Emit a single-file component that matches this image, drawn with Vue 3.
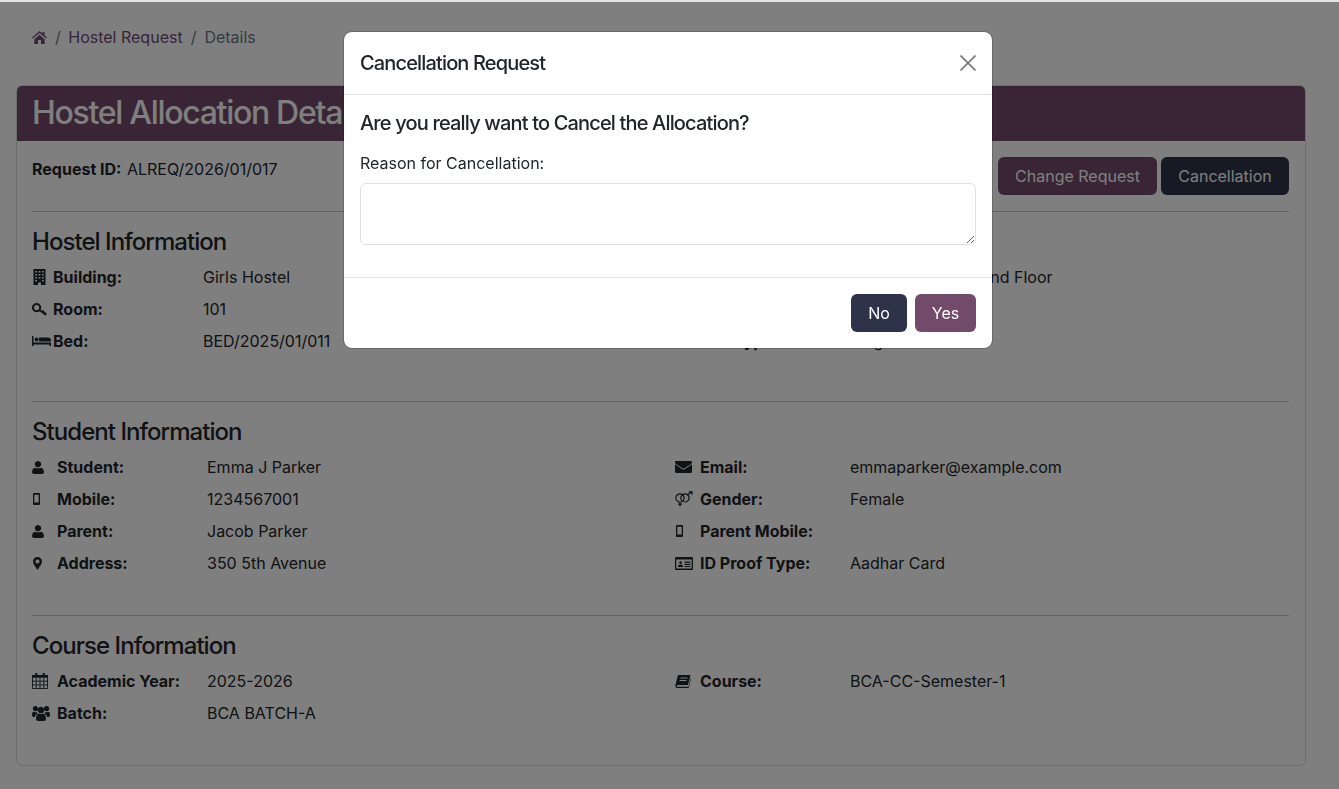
<script setup>
const icons = {
  home: { w: 15, h: 13, d: 'M7.5 0 0 6.4l.9 1L7.500 1.900 14.100 7.400l.9-1-2.500-2.100V1h-2v1.600ZM2.300 8.200 7.500 3.700l5.200 4.500V13H9V9H6v4H2.300Z' },
  building: { w: 13, h: 16, d: 'M.5 0h12v16H8v-2.500H5V16H.5ZM2.300 2v1.400h1.700V2Zm3.300 0v1.400h1.800V2Zm3.400 0v1.400h1.700V2ZM2.300 5v1.400h1.700V5Zm3.300 0v1.400h1.800V5ZM9 5v1.400h1.700V5ZM2.300 8v1.400h1.700V8Zm3.300 0v1.400h1.800V8ZM9 8v1.400h1.700V8ZM2.300 11v1.400h1.700V11ZM9 11v1.400h1.700V11Z' },
  key: { w: 15, h: 13, s: 'M4.600 1a3.600 3.600 0 1 0 .01 0ZM7.400 6.800l6.600 5.200M10.500 9.300l1.400-1.500M12.700 11l1.300-1.300', sw: 2 },
  bed: { w: 19, h: 10, d: 'M0 0h1.500v6.500H19V10h-1.500V8.500H1.500V10H0ZM4.500 1.500a2 2 0 1 0 .01 0ZM7 1.500h9q3 0 3 3v1H7Z' },
  user: { w: 12, h: 13, d: 'M6 0a3.200 3.200 0 1 0 .01 0ZM0 11.300C0 8.500 1.500 7 3 6.800c1 .8 5 .8 6 0 1.500.2 3 1.700 3 4.500 0 1.100-1 1.700-2 1.700H2c-1 0-2-.6-2-1.700Z' },
  mobile: { w: 7, h: 12, d: 'M1 0h5a1 1 0 0 1 1 1v10a1 1 0 0 1-1 1H1a1 1 0 0 1-1-1V1a1 1 0 0 1 1-1ZM1.300 1.800v7.800h4.400V1.800Z' },
  marker: { w: 9, h: 13, d: 'M4.500 0A4.500 4.500 0 0 0 0 4.500C0 7 3 10.500 4.500 13 6 10.500 9 7 9 4.500A4.500 4.500 0 0 0 4.500 0Zm0 2.500a2 2 0 1 0 .01 0Z' },
  envelope: { w: 17, h: 12, d: 'M0 1.200C0 .5.6 0 1.200 0h14.600c.6 0 1.200.5 1.200 1.200 0 .8-.7 1.600-1.300 2L9.500 7.300c-.6.4-1.400.4-2 0L1.300 3.200C.7 2.800 0 2 0 1.200ZM0 3.300v7.500c0 .7.5 1.200 1.200 1.200h14.600c.7 0 1.200-.5 1.200-1.200V3.300L10 8c-1 .8-2 .8-3 0Z' },
  venus: { w: 18, h: 16, s: 'M5 2.800a4.100 4.100 0 1 0 .01 0ZM10 2.800a4.100 4.100 0 1 0 .01 0ZM5 11V15.500M3 13.200h4M12.800 3.800 16.800.9M13.800.8h3.200v3', sw: 1.2 },
  idcard: { w: 18, h: 13, d: 'M1 0h16a1 1 0 0 1 1 1v11a1 1 0 0 1-1 1H1a1 1 0 0 1-1-1V1a1 1 0 0 1 1-1ZM1.300 2.600v8.900h15.400V2.600ZM5.500 4.200a1.400 1.400 0 1 0 .01 0ZM3 10V9q0-1.600 2.500-1.600T8 9v1ZM9.500 4.500h6v1.200h-6Zm0 2.200h6v1.200h-6Zm0 2.200h6v1.200h-6Z' },
  calendar: { w: 16, h: 16, d: 'M0 2h3.200V0h2.200v2h5.200V0h2.200v2H16v2.800H0Z', s: 'M.5 4.500v11h15v-11M4.200 5v10.500M8 5v10.500M11.800 5v10.500M.5 8.200h15M.5 11.900h15', sw: .9 },
  users: { w: 18, h: 16, d: 'M9 1.700a3.300 3.300 0 1 0 .01 0ZM3.400 1a2.600 2.600 0 1 0 .01 0ZM14.600 1a2.600 2.600 0 1 0 .01 0ZM4 14c0-3.500 1.500-5.500 3-5.500 1 .8 3 .8 4 0 1.500 0 3 2 3 5.500 0 1.200-1 2-2 2H6c-1 0-2-.8-2-2ZM0 9.500C0 7.500 1 6.800 2 6.800c1 .7 2.300.5 2.800.3 0 .9.4 1.400.7 1.600C4 9.500 3 11 3 12H1.200C.5 12 0 11 0 9.500ZM18 9.500c0-2-1-2.700-2-2.700-1 .7-2.300.5-2.800.3 0 .9-.4 1.400-.7 1.600 1.500.8 2.500 2.300 2.500 3.300h1.800c.7 0 1.200-1 1.200-2.500Z' },
  book: { w: 16, h: 13, d: 'M3 0h12.500L13 10H2.500c-1 0-1 1.700 0 1.700h11L15.700 3 16 4l-2.200 8.400q-.2.6-.8.6H2.400C.8 13 0 11.500.4 10ZM5.500 2.500l-.3 1h7l.3-1ZM4.800 5l-.3 1h7l.3-1Z' }
}

const hostelRows = [
  { icon: 'building', label: 'Building:', value: 'Girls Hostel' },
  { icon: 'building', label: 'Floor:', value: 'Girls Hostel - Ground Floor' },
  { icon: 'key', label: 'Room:', value: '101' },
  { icon: 'building', label: 'Room Type:', value: '' },
  { icon: 'bed', label: 'Bed:', value: 'BED/2025/01/011' },
  { icon: 'bed', label: 'Bed Type:', value: 'Single' }
]
const studentRows = [
  { icon: 'user', label: 'Student:', value: 'Emma J Parker' },
  { icon: 'envelope', label: 'Email:', value: 'emmaparker@example.com' },
  { icon: 'mobile', label: 'Mobile:', value: '1234567001' },
  { icon: 'venus', label: 'Gender:', value: 'Female' },
  { icon: 'user', label: 'Parent:', value: 'Jacob Parker' },
  { icon: 'mobile', label: 'Parent Mobile:', value: '' },
  { icon: 'marker', label: 'Address:', value: '350 5th Avenue' },
  { icon: 'idcard', label: 'ID Proof Type:', value: 'Aadhar Card' }
]
const courseRows = [
  { icon: 'calendar', label: 'Academic Year:', value: '2025-2026' },
  { icon: 'book', label: 'Course:', value: 'BCA-CC-Semester-1' },
  { icon: 'users', label: 'Batch:', value: 'BCA BATCH-A' }
]
const sections = [
  { title: 'Hostel Information', rows: hostelRows, cls: 'narrow gap-a' },
  { title: 'Student Information', rows: studentRows, cls: 'gap-b' },
  { title: 'Course Information', rows: courseRows, cls: 'gap-c' }
]
</script>

<template>
  <div class="page">
    <nav class="crumbs">
      <svg class="crumb-home" viewBox="0 0 15 13" width="15" height="13"><path :d="icons.home.d" fill-rule="evenodd" /></svg>
      <span class="sep">/</span>
      <a class="crumb-link">Hostel Request</a>
      <span class="sep">/</span>
      <span class="crumb-cur">Details</span>
    </nav>

    <section class="card">
      <h1 class="card-head">Hostel Allocation Details</h1>
      <div class="card-body">
        <div class="req-row">
          <div class="req-id"><b>Request ID:</b> ALREQ/2026/01/017</div>
          <div class="req-btns">
            <button class="btn plum">Change Request</button>
            <button class="btn navy-dark">Cancellation</button>
          </div>
        </div>

        <div v-for="s in sections" :key="s.title" class="section" :class="s.cls">
          <hr class="rule" />
          <h2 class="sec-title">{{ s.title }}</h2>
          <div class="grid">
            <div v-for="r in s.rows" :key="r.label" class="row">
              <span class="ico" :class="`i-${r.icon}`">
                <svg :viewBox="`0 0 ${icons[r.icon].w} ${icons[r.icon].h}`" :width="icons[r.icon].w" :height="icons[r.icon].h">
                  <path v-if="icons[r.icon].d" :d="icons[r.icon].d" fill-rule="evenodd" />
                  <path v-if="icons[r.icon].s" :d="icons[r.icon].s" fill="none" stroke="currentColor" :stroke-width="icons[r.icon].sw" />
                </svg>
              </span>
              <b class="lab">{{ r.label }}</b>
              <span class="val">{{ r.value }}</span>
            </div>
          </div>
        </div>
      </div>
    </section>
  </div>

  <div class="backdrop">
    <div class="modal">
      <header class="m-head">
        <h3 class="m-title">Cancellation Request</h3>
        <svg class="m-close" viewBox="0 0 16 16" width="16" height="16"><path d="M.5.5l15 15M15.5.5l-15 15" stroke="#777" stroke-width="1.600" fill="none" /></svg>
      </header>
      <div class="m-body">
        <h4 class="m-q">Are you really want to Cancel the Allocation?</h4>
        <label class="m-label">Reason for Cancellation:</label>
        <textarea class="m-text"></textarea>
      </div>
      <footer class="m-foot">
        <button class="btn no">No</button>
        <button class="btn yes">Yes</button>
      </footer>
    </div>
  </div>
  <div class="topline"></div>
</template>

<style>
html, body { margin: 0; background: #fff; }
</style>

<style scoped>
.page {
  box-sizing: border-box;
  width: 1339px;
  height: 789px;
  overflow: hidden;
  padding: 3px 33px 0 16px;
  font-family: Inter, "Liberation Sans", sans-serif;
  font-size: 16px;
  line-height: 24px;
  color: #212529;
}
.crumbs { display: flex; align-items: center; height: 24px; margin: 22px 0 0 16px; color: #6c7585; }
.crumb-home { fill: #6e4f72; margin-right: 8px; }
.sep { margin-right: 8px; }
.crumb-link { color: #6b4a72; margin-right: 8px; margin-left: -.5px; }
.card { margin-top: 36px; height: 681px; box-sizing: border-box; border: 1px solid #dcdcdc; border-radius: 6px; overflow: hidden; }
.card-head { margin: 0; height: 55px; background: #724b6b; color: #fff; padding: 0 16px 2px 15px; box-sizing: border-box; font-size: 32px; line-height: 53px; font-weight: 500; letter-spacing: -1.300px; white-space: nowrap; }
.card-body { padding: 16px 16px 16px 15px; }
.req-row { display: flex; justify-content: space-between; align-items: flex-start; height: 38px; }
.req-id { line-height: 24px; }
.req-id b { font-weight: 700; margin-right: 1px; }
.req-btns { display: flex; gap: 4px; }
.btn { font-family: inherit; font-size: 16px; line-height: 24px; border: 0; border-radius: 6px; padding: 0; color: #fff; height: 38px; }
.plum { background: #724b6b; width: 159px; }
.navy-dark { background: #2f3349; width: 128px; }
.rule { margin: 0; border: 0; border-top: 1px solid #c8c8c8; }
.section { margin-top: 0; }
.gap-a { height: 190px; margin-top: 16px; }
.gap-b { height: 214px; }
.sec-title { margin: 15px 0 9px; font-size: 24px; line-height: 29px; font-weight: 500; letter-spacing: -.950px; color: #212529; }
.grid { display: grid; grid-template-columns: 614px 614px; column-gap: 29px; }
.row { display: flex; align-items: center; height: 24px; margin-bottom: 8px; }
.ico { width: 25px; flex: none; display: flex; align-items: center; color: #212529; fill: currentColor; }
.i-building svg, .i-marker svg, .i-mobile svg { margin-left: 1px; }
.lab { width: 150px; flex: none; font-weight: 700; color: #212529; }
.narrow .row:nth-child(odd) .ico { width: 21px; }
.val { color: #212529; white-space: nowrap; }
.topline { position: fixed; left: 0; right: 0; top: 0; height: 2px; background: #e4e4e4; }
.backdrop { position: fixed; inset: 0; background: rgba(0,0,0,.5); font-family: Inter, "Liberation Sans", sans-serif; font-size: 16px; line-height: 24px; padding-right: 3px; display: flex; justify-content: center; align-items: flex-start; box-sizing: border-box; }
.modal { margin-top: 31px; width: 650px; height: 318px; box-sizing: border-box; background: #fff; background-clip: padding-box; border-radius: 9px; color: #212529; border: 1px solid rgba(0,0,0,.175); }
.m-head { height: 62px; display: flex; align-items: center; justify-content: space-between; padding: 0 16px; border-bottom: 1px solid #dee2e6; }
.m-title { margin: 0; font-size: 20px; font-weight: 500; line-height: 24px; letter-spacing: -.85px; }
.m-body { padding: 16px 16px 0; height: 183px; box-sizing: border-box; border-bottom: 1px solid #dee2e6; }
.m-q { margin: 0 0 16px; font-size: 20px; font-weight: 500; line-height: 24px; letter-spacing: -.84px; }
.m-label { display: block; line-height: 24px; margin-bottom: 8px; }
.m-text { display: block; box-sizing: border-box; width: 616px; height: 62px; border: 1px solid #dee2e6; border-radius: 6px; background: #fff; }
.m-foot { display: flex; justify-content: flex-end; gap: 8px; padding: 16px; }
.no { background: #2f3349; width: 56px; }
.yes { background: #724b6b; width: 61px; }
</style>
